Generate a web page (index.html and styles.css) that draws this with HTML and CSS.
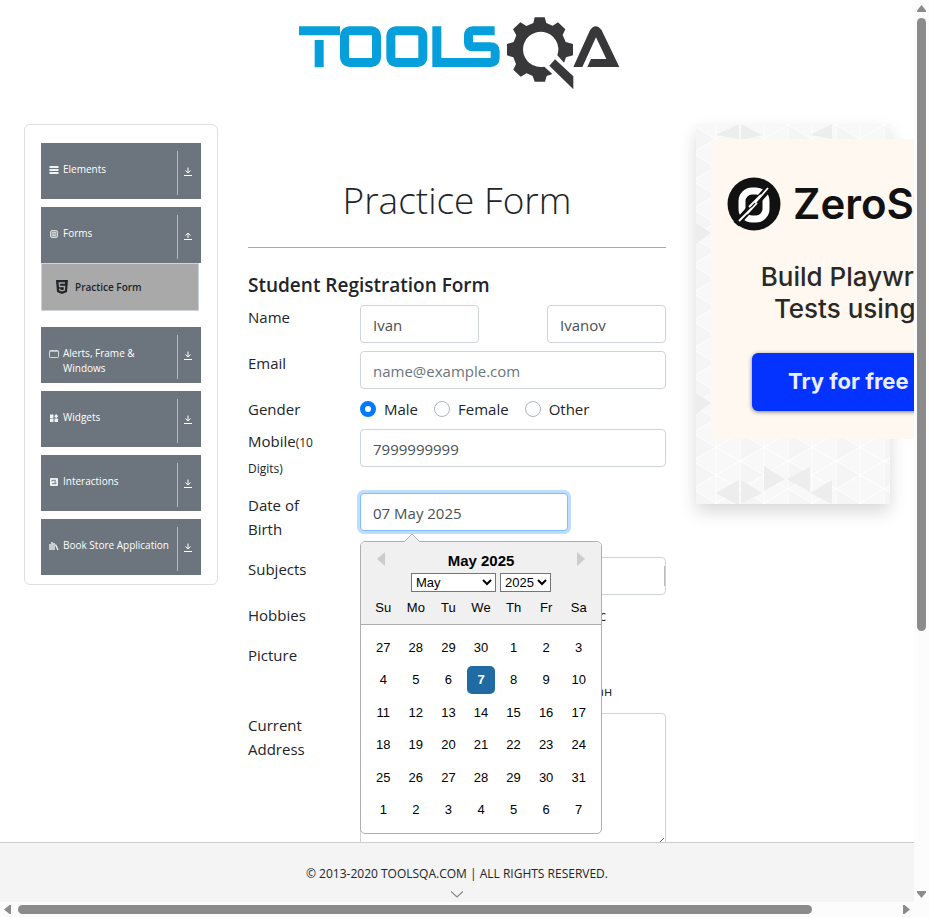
FILE: index.html
```html
<!DOCTYPE html>
<html lang="en">
<head>
<meta charset="utf-8">
<title>Practice Form</title>
<link rel="stylesheet" href="styles.css">
</head>
<body>
<svg class="defs" aria-hidden="true">
  <symbol id="down" viewBox="0 0 10 10"><path d="M5 .5v5.500M2.500 3.500L5 6 7.500 3.500M1 8.500h8" fill="none" stroke="currentColor"/></symbol>
  <symbol id="up" viewBox="0 0 10 10"><path d="M5 7V2M2.500 4.500L5 2l2.500 2.500M1 8.500h8" fill="none" stroke="currentColor"/></symbol>
</svg>
<div class="window">
  <div class="page">
    <header class="site-header">
      <a href="#" aria-label="ToolsQA home">
        <svg class="logo" viewBox="-9 0 1080 300">
          <g fill="none" stroke="#069fdc" stroke-width="27">
            <path d="M57 92.500H180M117.500 120V202"/>
            <rect x="193.500" y="92.500" width="96" height="95" rx="15"/>
            <rect x="332.500" y="92.500" width="96" height="95" rx="15"/>
            <path d="M470.500 79V187.500H632Q645.500 187.500 645.500 174V153Q645.500 140.500 632 140.500H578Q565.500 140.500 565.500 128V106Q565.500 92.500 578 92.500H644"/>
          </g>
          <g fill="#38383a">
            <path fill-rule="evenodd" d="M760 69L764 52H794L799 69 818 77 834 67 856 88 848 105 857 126 879 132V166L858 172 852 188 832 166A53 53 0 1 0 793 200L817 222 800 228 795 245H764L758 228 740 220 722 230 700 209 708 192 700 172 681 166V132L701 126 709 106 699 88 721 67 739 78Z"/>
            <path d="M825 178L880 229V268L808 197Z"/>
            <path d="M880 201L930 91Q947 66 965 91L1018 201H922L933 177H979L948 112 907 201Z"/>
          </g>
        </svg>
      </a>
    </header>

    <div class="columns">
      <nav class="sidebar" aria-label="Sections">
        <button class="group" type="button">
          <svg class="group-icon" viewBox="0 0 10 10"><path d="M.5 2h9M.5 5h9M.5 8h9" stroke="currentColor" stroke-width="1.800"/></svg>
          <span class="group-name">Elements</span>
          <span class="group-toggle"><svg><use href="#down"/></svg></span>
        </button>
        <div class="open-group">
          <button class="group" type="button">
            <svg class="group-icon" viewBox="0 0 10 10"><rect x="1.500" y="1.500" width="7" height="7" rx="1.500" fill="#9da3a9" stroke="currentColor" stroke-opacity=".8"/><path d="M3 3.500h4M3 5h4M3 6.500h4" stroke="currentColor" stroke-width=".6"/></svg>
            <span class="group-name">Forms</span>
            <span class="group-toggle"><svg><use href="#up"/></svg></span>
          </button>
          <a class="sub-item" href="#">
            <svg class="sub-icon" viewBox="0 0 12 14"><path d="M0 0h12l-1 12-5 2-5-2z" fill="#212529"/><path d="M9 3H3.300l.3 3.500h5L8.300 10 6 10.800 3.800 10 3.600 8.600" fill="none" stroke="#a9a9a9" stroke-width="1.300"/></svg>
            <span>Practice Form</span>
          </a>
        </div>
        <button class="group" type="button">
          <svg class="group-icon" viewBox="0 0 10 10"><rect x=".5" y="1.500" width="9" height="7" rx=".8" fill="none" stroke="currentColor" stroke-opacity=".8"/><path d="M1 2.500h8" stroke="currentColor" stroke-opacity=".6"/></svg>
          <span class="group-name">Alerts, Frame &amp; Windows</span>
          <span class="group-toggle"><svg><use href="#down"/></svg></span>
        </button>
        <button class="group" type="button">
          <svg class="group-icon" viewBox="0 0 10 10" fill="currentColor"><path d="M1 1.500h3.500V5H1zM1 5.500h3.500V9H1zM5.500 5.500H9V9H5.500zM7.200 1l2 2.200-2 2-2-2z"/></svg>
          <span class="group-name">Widgets</span>
          <span class="group-toggle"><svg><use href="#down"/></svg></span>
        </button>
        <button class="group" type="button">
          <svg class="group-icon" viewBox="0 0 10 10"><rect x="1" y="1" width="8" height="8" rx="1" fill="currentColor"/><path d="M3 4.500V3.300h4M7 5.500v1.200H3M5 5h2" fill="none" stroke="#6c757d" stroke-width=".9"/></svg>
          <span class="group-name">Interactions</span>
          <span class="group-toggle"><svg><use href="#down"/></svg></span>
        </button>
        <button class="group" type="button">
          <svg class="group-icon" viewBox="0 0 10 10"><path d="M1 3v6M3 1v8M5 2v7M6.500 3.500L9 9" fill="none" stroke="currentColor" stroke-width="1.400"/></svg>
          <span class="group-name">Book Store Application</span>
          <span class="group-toggle"><svg><use href="#down"/></svg></span>
        </button>
      </nav>

      <main class="main">
        <h1>Practice Form</h1>
        <hr>
        <h2>Student Registration Form</h2>
        <form>
          <div class="row names">
            <label for="first">Name</label>
            <input class="field" id="first" type="text" value="Ivan">
            <input class="field last" type="text" value="Ivanov" aria-label="Last name">
          </div>
          <div class="row">
            <label for="email">Email</label>
            <input class="field" id="email" type="email" placeholder="name@example.com">
          </div>
          <div class="row">
            <span>Gender</span>
            <div class="choices">
              <label><input type="radio" name="gender" checked>Male</label>
              <label><input type="radio" name="gender">Female</label>
              <label><input type="radio" name="gender">Other</label>
            </div>
          </div>
          <div class="row tall">
            <label for="mobile">Mobile<small>(10 Digits)</small></label>
            <input class="field" id="mobile" type="tel" value="7999999999">
          </div>
          <div class="row tall">
            <label for="dob">Date of Birth</label>
            <div class="date">
              <input class="field focused" id="dob" type="text" value="07 May 2025">
              <div class="picker">
                <svg class="pointer" viewBox="0 0 16 8"><path d="M0 8L8 0l8 8" fill="#f0f0f0" stroke="#aeaeae"/></svg>
                <div class="picker-head">
                  <div class="picker-title">
                    <button type="button" aria-label="Previous month"><svg viewBox="0 0 8 14"><path d="M8 0v14L0 7z" fill="#ccc"/></svg></button>
                    <strong>May 2025</strong>
                    <button type="button" aria-label="Next month"><svg viewBox="0 0 8 14"><path d="M0 0v14l8-7z" fill="#ccc"/></svg></button>
                  </div>
                  <div class="picker-selects">
                    <select class="month" aria-label="Month"><option>May</option></select>
                    <select class="year" aria-label="Year"><option>2025</option></select>
                  </div>
                  <div class="week-names"><span>Su</span><span>Mo</span><span>Tu</span><span>We</span><span>Th</span><span>Fr</span><span>Sa</span></div>
                </div>
                <div class="days">
                  <button type="button">27</button><button type="button">28</button><button type="button">29</button><button type="button">30</button><button type="button">1</button><button type="button">2</button><button type="button">3</button>
                  <button type="button">4</button><button type="button">5</button><button type="button">6</button><button type="button" class="selected">7</button><button type="button">8</button><button type="button">9</button><button type="button">10</button>
                  <button type="button">11</button><button type="button">12</button><button type="button">13</button><button type="button">14</button><button type="button">15</button><button type="button">16</button><button type="button">17</button>
                  <button type="button">18</button><button type="button">19</button><button type="button">20</button><button type="button">21</button><button type="button">22</button><button type="button">23</button><button type="button">24</button>
                  <button type="button">25</button><button type="button">26</button><button type="button">27</button><button type="button">28</button><button type="button">29</button><button type="button">30</button><button type="button">31</button>
                  <button type="button">1</button><button type="button">2</button><button type="button">3</button><button type="button">4</button><button type="button">5</button><button type="button">6</button><button type="button">7</button>
                </div>
              </div>
            </div>
          </div>
          <div class="row">
            <label for="subjects">Subjects</label>
            <div class="subjects"><input class="field" id="subjects" type="text"></div>
          </div>
          <div class="row hobbies">
            <span>Hobbies</span>
            <div class="choices">
              <label><input type="checkbox">Sports</label>
              <label><input type="checkbox">Reading</label>
              <label><input type="checkbox">Music</label>
            </div>
          </div>
          <div class="row picture">
            <label for="picture">Picture</label>
            <div class="file">
              <input id="picture" type="file">
              <span class="file-name">Файл не выбран</span>
            </div>
          </div>
          <div class="row">
            <label for="address">Current Address</label>
            <textarea class="field" id="address" rows="5"></textarea>
          </div>
        </form>
      </main>

      <aside class="promo">
        <div class="promo-panel">
          <svg class="promo-pattern" aria-hidden="true">
            <defs>
              <pattern id="tri" width="48" height="28" patternUnits="userSpaceOnUse" patternTransform="translate(-4 1)">
                <rect width="48" height="28" fill="#f8f8f8"/>
                <path d="M0 0l24 14L0 28z" fill="#f5f5f5"/>
                <path d="M0 0v28M24 0v28M0 0l48 28M48 0L0 28" stroke="#fff"/>
              </pattern>
            </defs>
            <rect width="100%" height="100%" fill="url(#tri)"/>
            <g fill="#ededed">
              <path d="M20 11L43 0v15zM45 0l21 11-21 5zM114 11L136 0v15zM0 99l15 10-15 11zM0 269l15 10-15 11z"/>
              <path d="M20 369l23-13v24h-3zM45 356l21 13-21 11zM114 369l22-13v24zM68 342l21 13-21 12zM91 355l23-12v25z"/>
            </g>
          </svg>
          <div class="creative">
            <div class="brand">
              <svg viewBox="0 0 54 54">
                <circle cx="27" cy="27" r="26.500" fill="#111"/>
                <rect x="15" y="14" width="24" height="28" rx="10" fill="none" stroke="#fff" stroke-width="7"/>
                <path d="M9 47L43 10" stroke="#111" stroke-width="7"/>
                <path d="M12 44l13-13M28 26L41 11M22 30l12-12M20 37l10-11" stroke="#fff" stroke-width="1.800"/>
              </svg>
              <span>ZeroStep</span>
            </div>
            <p>Build Playwright<br>Tests using AI</p>
            <a class="cta" href="#">Try for free ↗</a>
          </div>
        </div>
      </aside>
    </div>

    <footer class="site-footer">
      <span>© 2013-2020 TOOLSQA.COM | ALL RIGHTS RESERVED.</span>
      <svg viewBox="0 0 12 7"><path d="M0 .5l6 5.500 6-5.500" fill="none" stroke="#888" stroke-width="1.200"/></svg>
    </footer>
  </div>
  <div class="bar vertical" aria-hidden="true">
    <svg viewBox="0 0 9 7"><path d="M4.500 0L9 5.500V7H0V5.500z"/></svg>
    <div class="track"><div class="thumb"></div></div>
    <svg viewBox="0 0 9 7"><path d="M4.500 7L9 1.500V0H0v1.500z"/></svg>
  </div>
  <div class="bar horizontal" aria-hidden="true">
    <svg viewBox="0 0 7 9"><path d="M0 4.500L5.500 0H7v9H5.500z"/></svg>
    <div class="track"><div class="thumb"></div></div>
    <svg viewBox="0 0 7 9"><path d="M7 4.500L1.500 0H0v9h1.500z"/></svg>
  </div>
</div>
</body>
</html>
```
FILE: styles.css
```css
* { box-sizing: border-box; }
body {
  margin: 0;
  overflow: hidden;
  color: #212529;
  background: #fff;
  font: 15px/24px "Open Sans", "Noto Sans", sans-serif;
}
button, input, select, textarea { font: inherit; color: inherit; }
button { cursor: pointer; }
.defs { display: none; }

.window {
  display: grid;
  grid-template: minmax(0, 1fr) 15px / minmax(0, 1fr) 15px;
  height: 100vh;
  background: #fcfcfc;
}
.page {
  display: grid;
  grid-template-rows: auto minmax(0, 1fr) auto;
  overflow: hidden;
  background: #fff;
}

.site-header { text-align: center; }
.logo { display: block; width: 360px; height: 100px; margin: 0 auto; }

.columns {
  display: grid;
  grid-template-columns: minmax(0, 194fr) minmax(0, 418fr) minmax(0, 194fr);
  gap: 30px;
  align-items: start;
  padding: 24px 24px 0;
}

.sidebar {
  display: flex;
  flex-direction: column;
  gap: 8px;
  padding: 18px 16px 9px;
  border: 1px solid #dfdfdf;
  border-radius: 6px;
}
.group {
  display: flex;
  align-items: flex-start;
  width: 100%;
  height: 56px;
  padding: 8px 8px 0;
  border: 0;
  color: #fff;
  background: #6c757d;
  font-size: 10px;
  font-weight: 500;
  line-height: 15px;
  text-align: left;
}
.group-icon { flex: none; width: 10px; height: 10px; margin: 14px 4px 0 0; opacity: .9; }
.group-name { flex: 1; margin-top: 11px; }
.group-toggle {
  display: grid;
  place-items: center;
  width: 16px;
  height: 44px;
  padding: 0 0 2px 5px;
  border-left: 1px solid #b5babe;
}
.group-toggle svg { width: 10px; height: 10px; }
.open-group { margin-bottom: 8px; }
.sub-item {
  display: flex;
  align-items: center;
  gap: 7px;
  height: 48px;
  margin-right: 2px;
  padding-left: 14px;
  border: 1px solid #ced4da;
  color: #212529;
  background: #a9a9a9;
  font-size: 10px;
  font-weight: 600;
  line-height: 15px;
  text-decoration: none;
}
.sub-icon { width: 12px; height: 14px; }

.main h1 {
  margin: 52px 0 23px;
  font-size: 37px;
  font-weight: 300;
  line-height: 48px;
  text-align: center;
}
.main hr { margin: 0 0 25px; border: 0; border-top: 1px solid #a8a9aa; }
.main h2 { margin: 0 0 8px; font-size: 19px; font-weight: 600; line-height: 24px; }

.row {
  display: grid;
  grid-template-columns: 82px minmax(0, 1fr);
  column-gap: 30px;
  align-items: start;
  margin-bottom: 8px;
}
.names { grid-template-columns: 82px minmax(0, 1fr) minmax(0, 1fr); }
.names .field { width: 119px; }
.names .last { justify-self: end; }
.tall { min-height: 56px; }
.hobbies { min-height: 32px; }
.picture { min-height: 62px; }
small { font-size: 12px; }

.field {
  width: 100%;
  height: 38px;
  padding: 8px 12px 6px;
  border: 1px solid #ced4da;
  border-radius: 4px;
  outline: 0;
  color: #495057;
  background: #fff;
}
.field::placeholder { color: #6c757d; opacity: 1; }
textarea.field { display: block; height: 134px; }
.focused { border-color: #80bdff; box-shadow: 0 0 0 3px rgba(0, 123, 255, .25); }

.choices { display: flex; gap: 16px; }
.choices label { display: flex; align-items: center; gap: 8px; }
.choices input { width: 16px; height: 16px; margin: 0; }
.choices input[type="radio"] {
  appearance: none;
  border: 1px solid #adb5bd;
  border-radius: 50%;
  background: #fff;
}
.choices input[type="radio"]:checked { border: 5px solid #007bff; }

.subjects { position: relative; }
.subjects::after {
  content: "";
  position: absolute;
  top: 9px;
  right: 1px;
  width: 1px;
  height: 20px;
  background: #bbb;
}

.file { display: flex; align-items: center; padding-top: 36px; font-size: 13px; }
.file input { width: 148px; color: transparent; }

.date { position: relative; }
.date .field { display: block; width: 208px; }
.picker {
  position: absolute;
  z-index: 1;
  top: 48px;
  left: 0;
  width: 242px;
  border: 1px solid #aeaeae;
  border-radius: 5px;
  color: #000;
  background: #fff;
  font: 13px/27px "Liberation Sans", Arial, sans-serif;
}
.pointer { position: absolute; top: -8px; left: 43px; width: 16px; height: 8px; }
.picker-head { padding: 8px 0 3px; border-bottom: 1px solid #aeaeae; border-radius: 4px 4px 0 0; background: #f0f0f0; }
.picker-title { display: flex; align-items: center; justify-content: space-between; height: 22px; padding: 0 16px; }
.picker-title button { display: grid; width: 8px; height: 22px; padding: 2px 0; border: 0; background: none; }
.picker-title svg { width: 8px; height: 14px; }
.picker-title strong { font-size: 15px; line-height: 22px; }
.picker-selects { display: flex; justify-content: center; gap: 4px; margin-top: 1px; }
.picker-selects select { height: 19px; padding: 0; border: 1px solid #767676; border-radius: 0; background: #fff; line-height: 17px; }
.month { width: 85px; }
.year { width: 51px; }
.week-names, .days { display: grid; grid-template-columns: repeat(7, 1fr); padding: 0 6px; text-align: center; }
.week-names { margin-top: 2px; }
.days { height: 208px; padding: 6px 6px 7px; }
.days button { margin: 2px; padding: 0; border: 0; border-radius: 5px; background: none; }
.days .selected { color: #fff; background: #216ba5; font-weight: 700; }

.promo-panel {
  position: relative;
  height: 380px;
  padding: 15px;
  box-shadow: 0 8px 16px rgba(0, 0, 0, .15);
}
.promo-pattern { position: absolute; inset: 0; width: 100%; height: 100%; }
.creative {
  position: relative;
  width: 300px;
  height: 300px;
  padding-top: 38px;
  background: #fef8f1;
  color: #2b2927;
  font-family: Inter, sans-serif;
}
.brand { display: flex; align-items: center; gap: 12px; padding-left: 16px; color: #111; font-size: 42px; font-weight: 600; line-height: 54px; }
.brand svg { width: 54px; height: 54px; }
.creative p { margin: 30px 0 0; font-size: 26px; font-weight: 500; line-height: 32px; text-align: center; }
.cta {
  display: block;
  width: 218px;
  height: 58px;
  margin: 28px 0 0 41px;
  padding-left: 36px;
  border-radius: 6px;
  color: #e8edff;
  background: #0433ff;
  box-shadow: 0 1px 4px rgba(0, 0, 0, .5);
  font-size: 22px;
  font-weight: 700;
  line-height: 56px;
  text-decoration: none;
}

.site-footer {
  position: relative;
  z-index: 2;
  display: flex;
  flex-direction: column;
  align-items: center;
  height: 60px;
  padding-top: 19px;
  border-top: 1px solid #ccc;
  background: #f4f4f4;
  font-size: 12px;
}
.site-footer svg { width: 12px; height: 7px; margin-top: 5px; }

.bar { display: flex; align-items: center; justify-content: space-between; gap: 6px; fill: #8b8b8b; }
.bar svg { flex: none; }
.track { flex: 1; }
.thumb { border-radius: 5px; background: #8b8b8b; }
.vertical { flex-direction: column; padding: 5px 0 4px; }
.vertical svg { width: 9px; height: 7px; }
.vertical .thumb { width: 9px; height: 70.7%; }
.horizontal { gap: 7px; padding: 0 4px; }
.horizontal svg { width: 7px; height: 9px; }
.horizontal .thumb { width: 90.4%; height: 9px; }
```
